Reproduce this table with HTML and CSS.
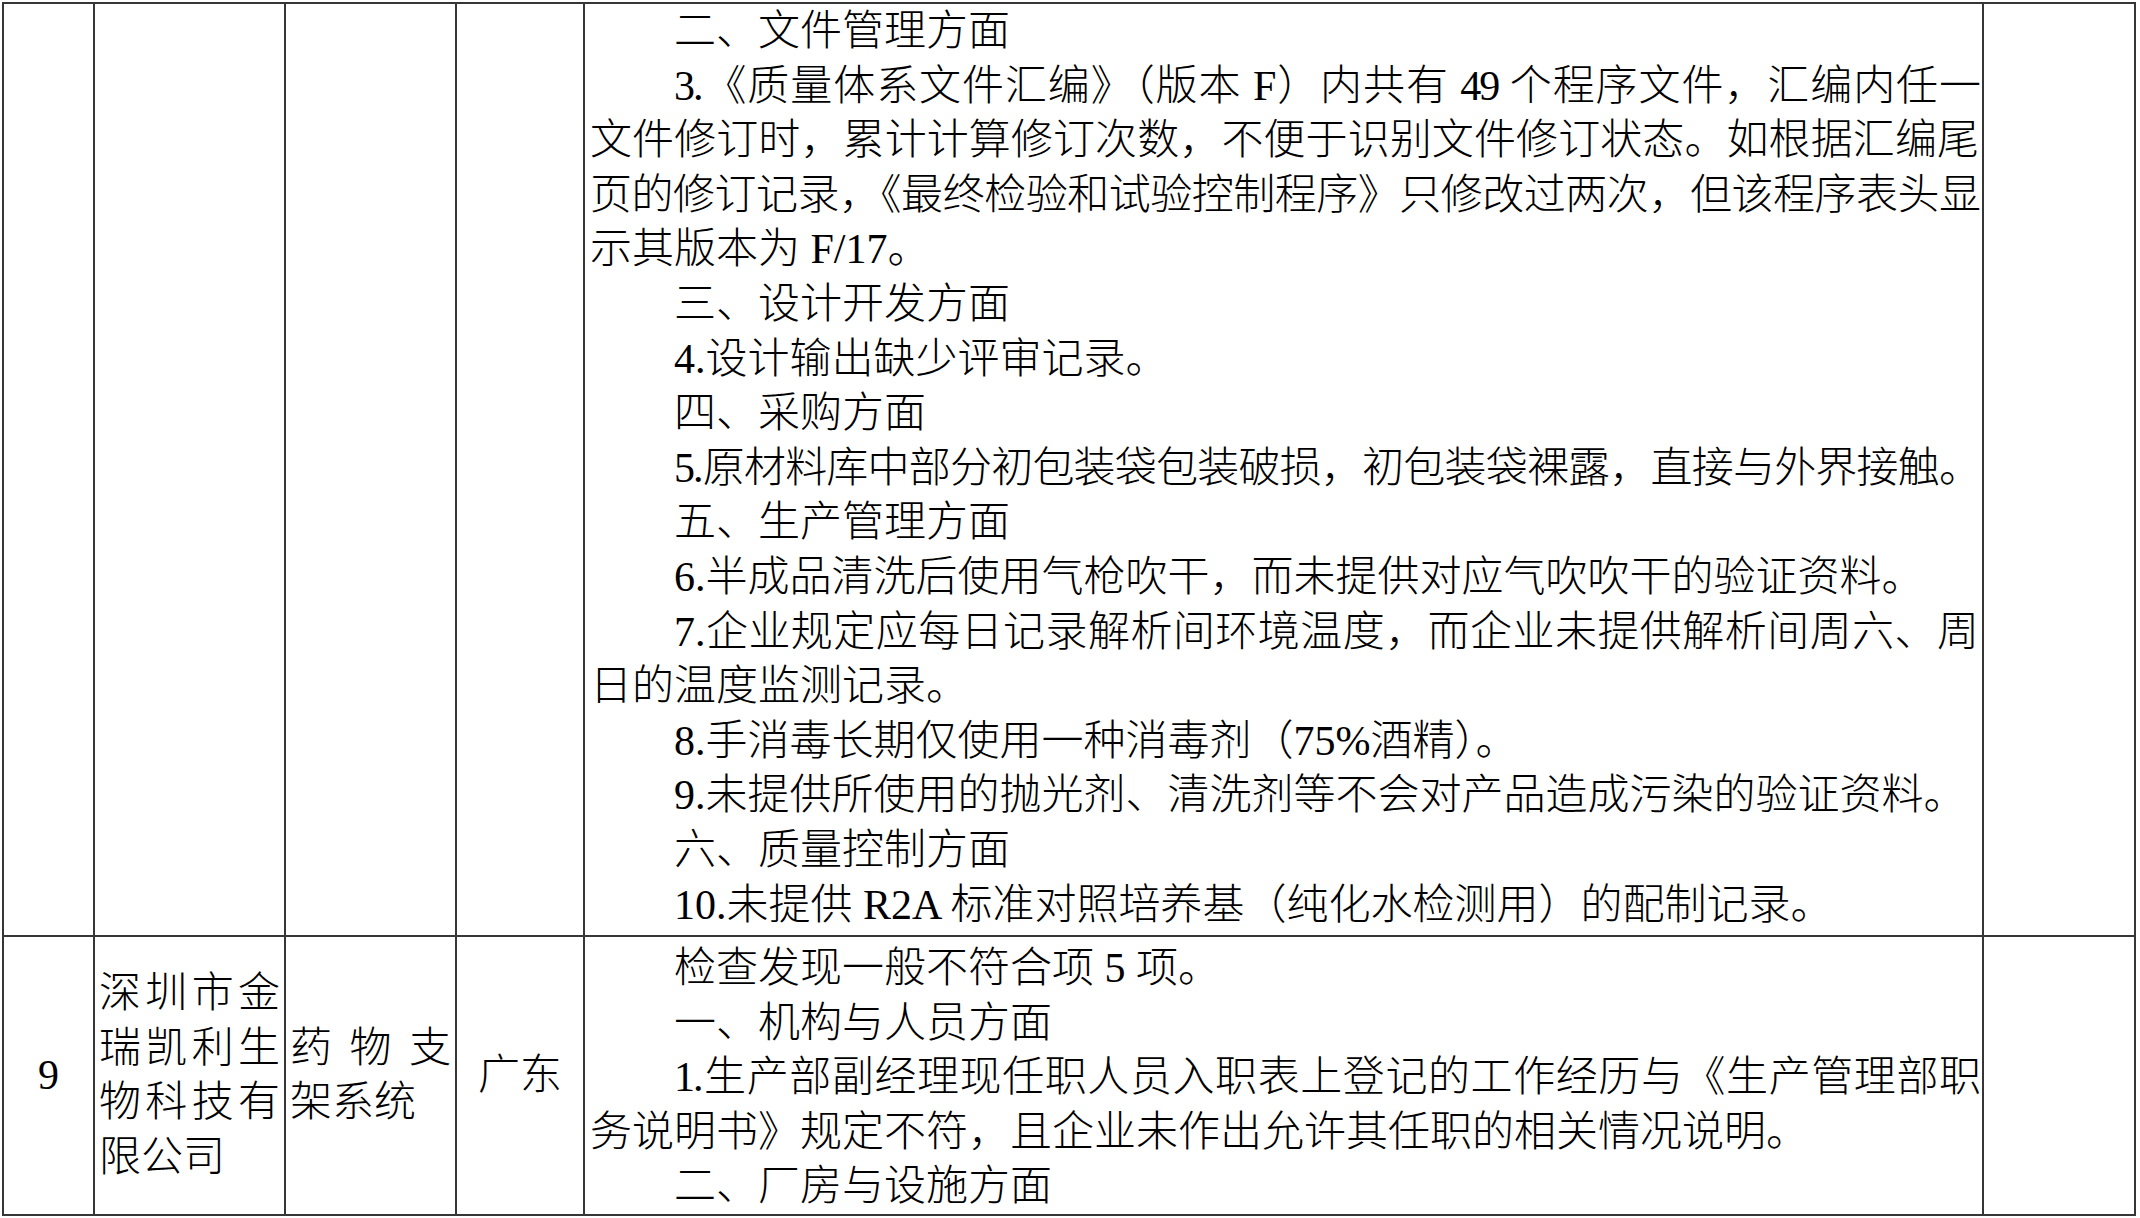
FILE: index.html
```html
<!DOCTYPE html>
<html lang="zh-CN">
<head>
<meta charset="utf-8">
<title>检查结果</title>
<link rel="stylesheet" href="styles.css">
</head>
<body>
<table class="sheet">
  <colgroup>
    <col class="c-no">
    <col class="c-co">
    <col class="c-prod">
    <col class="c-prov">
    <col class="c-text">
    <col class="c-note">
  </colgroup>
  <tbody>
    <tr class="r1">
      <td></td>
      <td></td>
      <td></td>
      <td></td>
      <td class="txt first">
        <span class="ln ind">二、文件管理方面</span>
        <span class="ln ind j t">3.《质量体系文件汇编》（版本 F）内共有 49 个程序文件，汇编内任一</span>
        <span class="ln j">文件修订时，累计计算修订次数，不便于识别文件修订状态。如根据汇编尾</span>
        <span class="ln j t">页的修订记录，《最终检验和试验控制程序》只修改过两次，但该程序表头显</span>
        <span class="ln">示其版本为 F/17。</span>
        <span class="ln ind">三、设计开发方面</span>
        <span class="ln ind">4.设计输出缺少评审记录。</span>
        <span class="ln ind">四、采购方面</span>
        <span class="ln ind j t">5.原材料库中部分初包装袋包装破损，初包装袋裸露，直接与外界接触。</span>
        <span class="ln ind">五、生产管理方面</span>
        <span class="ln ind">6.半成品清洗后使用气枪吹干，而未提供对应气吹吹干的验证资料。</span>
        <span class="ln ind j">7.企业规定应每日记录解析间环境温度，而企业未提供解析间周六、周</span>
        <span class="ln">日的温度监测记录。</span>
        <span class="ln ind">8.手消毒长期仅使用一种消毒剂（75%酒精）。</span>
        <span class="ln ind">9.未提供所使用的抛光剂、清洗剂等不会对产品造成污染的验证资料。</span>
        <span class="ln ind">六、质量控制方面</span>
        <span class="ln ind">10.未提供 R2A 标准对照培养基（纯化水检测用）的配制记录。</span>
      </td>
      <td></td>
    </tr>
    <tr class="r2">
      <td class="mid center">9</td>
      <td class="mid just">深圳市金瑞凯利生物科技有限公司</td>
      <td class="mid just">药物支架系统</td>
      <td class="mid center">广东</td>
      <td class="txt second">
        <span class="ln ind">检查发现一般不符合项 5 项。</span>
        <span class="ln ind">一、机构与人员方面</span>
        <span class="ln ind j t">1.生产部副经理现任职人员入职表上登记的工作经历与《生产管理部职</span>
        <span class="ln">务说明书》规定不符，且企业未作出允许其任职的相关情况说明。</span>
        <span class="ln ind">二、厂房与设施方面</span>
      </td>
      <td></td>
    </tr>
  </tbody>
</table>
</body>
</html>
```

FILE: styles.css
```css
html, body {
  margin: 0;
  padding: 0;
  background: #ffffff;
}

.sheet {
  border-collapse: collapse;
  table-layout: fixed;
  width: 2132px;
  margin: 2px 0 0 2px;
  font-family: "Liberation Serif", "Noto Sans CJK SC", serif;
  font-weight: 300;
  font-size: 42px;
  line-height: 54.6px;
  color: #000000;
}

.c-no { width: 91px; }
.c-co { width: 191px; }
.c-prod { width: 171px; }
.c-prov { width: 128px; }
.c-text { width: 1399px; }
.c-note { width: 152px; }

.sheet td {
  border: 2px solid #363636;
  padding: 0 4px;
  vertical-align: top;
}

.r1 { height: 933px; }
.r2 { height: 278px; }

.sheet td.txt {
  padding: 0 3px 0 5px;
}

.sheet td.first { padding-top: 0; }
.sheet td.second { padding-top: 4px; }

.sheet td.mid { vertical-align: middle; }

.center { text-align: center; }

.just {
  text-align: justify;
}

.ln {
  display: block;
  white-space: nowrap;
}

.ind { text-indent: 2em; }

.j {
  text-align: justify;
  text-align-last: justify;
  white-space: normal;
}

.t { letter-spacing: -2px; }
```
